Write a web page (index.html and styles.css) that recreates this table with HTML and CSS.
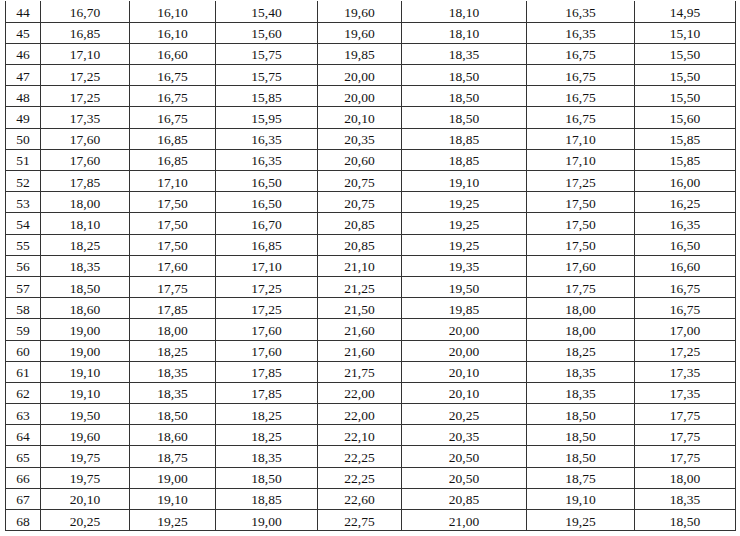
FILE: index.html
```html
<!DOCTYPE html>
<html>
<head>
<meta charset="utf-8">
<link rel="stylesheet" href="styles.css">
</head>
<body>
<div class="wrap">
<table class="grid">
<colgroup>
<col class="c1"><col class="c2"><col class="c3"><col class="c4"><col class="c5"><col class="c6"><col class="c7"><col class="c8">
</colgroup>
<tbody>
<tr><td>44</td><td>16,70</td><td>16,10</td><td>15,40</td><td>19,60</td><td>18,10</td><td>16,35</td><td>14,95</td></tr>
<tr><td>45</td><td>16,85</td><td>16,10</td><td>15,60</td><td>19,60</td><td>18,10</td><td>16,35</td><td>15,10</td></tr>
<tr><td>46</td><td>17,10</td><td>16,60</td><td>15,75</td><td>19,85</td><td>18,35</td><td>16,75</td><td>15,50</td></tr>
<tr><td>47</td><td>17,25</td><td>16,75</td><td>15,75</td><td>20,00</td><td>18,50</td><td>16,75</td><td>15,50</td></tr>
<tr><td>48</td><td>17,25</td><td>16,75</td><td>15,85</td><td>20,00</td><td>18,50</td><td>16,75</td><td>15,50</td></tr>
<tr><td>49</td><td>17,35</td><td>16,75</td><td>15,95</td><td>20,10</td><td>18,50</td><td>16,75</td><td>15,60</td></tr>
<tr><td>50</td><td>17,60</td><td>16,85</td><td>16,35</td><td>20,35</td><td>18,85</td><td>17,10</td><td>15,85</td></tr>
<tr><td>51</td><td>17,60</td><td>16,85</td><td>16,35</td><td>20,60</td><td>18,85</td><td>17,10</td><td>15,85</td></tr>
<tr><td>52</td><td>17,85</td><td>17,10</td><td>16,50</td><td>20,75</td><td>19,10</td><td>17,25</td><td>16,00</td></tr>
<tr><td>53</td><td>18,00</td><td>17,50</td><td>16,50</td><td>20,75</td><td>19,25</td><td>17,50</td><td>16,25</td></tr>
<tr><td>54</td><td>18,10</td><td>17,50</td><td>16,70</td><td>20,85</td><td>19,25</td><td>17,50</td><td>16,35</td></tr>
<tr><td>55</td><td>18,25</td><td>17,50</td><td>16,85</td><td>20,85</td><td>19,25</td><td>17,50</td><td>16,50</td></tr>
<tr><td>56</td><td>18,35</td><td>17,60</td><td>17,10</td><td>21,10</td><td>19,35</td><td>17,60</td><td>16,60</td></tr>
<tr><td>57</td><td>18,50</td><td>17,75</td><td>17,25</td><td>21,25</td><td>19,50</td><td>17,75</td><td>16,75</td></tr>
<tr><td>58</td><td>18,60</td><td>17,85</td><td>17,25</td><td>21,50</td><td>19,85</td><td>18,00</td><td>16,75</td></tr>
<tr><td>59</td><td>19,00</td><td>18,00</td><td>17,60</td><td>21,60</td><td>20,00</td><td>18,00</td><td>17,00</td></tr>
<tr><td>60</td><td>19,00</td><td>18,25</td><td>17,60</td><td>21,60</td><td>20,00</td><td>18,25</td><td>17,25</td></tr>
<tr><td>61</td><td>19,10</td><td>18,35</td><td>17,85</td><td>21,75</td><td>20,10</td><td>18,35</td><td>17,35</td></tr>
<tr><td>62</td><td>19,10</td><td>18,35</td><td>17,85</td><td>22,00</td><td>20,10</td><td>18,35</td><td>17,35</td></tr>
<tr><td>63</td><td>19,50</td><td>18,50</td><td>18,25</td><td>22,00</td><td>20,25</td><td>18,50</td><td>17,75</td></tr>
<tr><td>64</td><td>19,60</td><td>18,60</td><td>18,25</td><td>22,10</td><td>20,35</td><td>18,50</td><td>17,75</td></tr>
<tr><td>65</td><td>19,75</td><td>18,75</td><td>18,35</td><td>22,25</td><td>20,50</td><td>18,50</td><td>17,75</td></tr>
<tr><td>66</td><td>19,75</td><td>19,00</td><td>18,50</td><td>22,25</td><td>20,50</td><td>18,75</td><td>18,00</td></tr>
<tr><td>67</td><td>20,10</td><td>19,10</td><td>18,85</td><td>22,60</td><td>20,85</td><td>19,10</td><td>18,35</td></tr>
<tr><td>68</td><td>20,25</td><td>19,25</td><td>19,00</td><td>22,75</td><td>21,00</td><td>19,25</td><td>18,50</td></tr>
</tbody>
</table>
</div>
</body>
</html>
```
FILE: styles.css
```css
html, body {
  margin: 0;
  padding: 0;
  background: #ffffff;
}
.wrap {
  padding: 1px 0 0 5px;
}
.grid {
  border-collapse: collapse;
  table-layout: fixed;
  width: 730px;
  font-family: "Liberation Serif", "Times New Roman", Times, serif;
  font-size: 13.5px;
  color: #111;
}
.c1 { width: 35px; }
.c2 { width: 89px; }
.c3 { width: 86px; }
.c4 { width: 102px; }
.c5 { width: 84px; }
.c6 { width: 125px; }
.c7 { width: 108px; }
.c8 { width: 101px; }
.grid tr {
  height: 21.2px;
}
.grid td {
  border: 1px solid #333;
  padding: 2px 0 0 0;
  text-align: center;
  vertical-align: middle;
  line-height: 15px;
}
.grid tr:first-child td {
  border-top: none;
}
```
